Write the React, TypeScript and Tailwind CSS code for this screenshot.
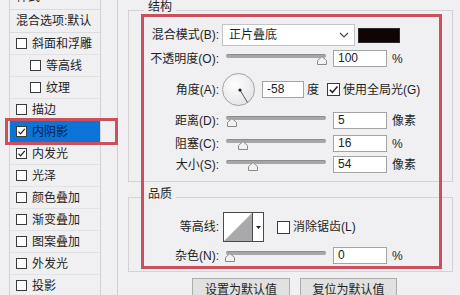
import React from "react";

const Box = ({ checked, className }: { checked?: boolean; className: string }) => (
  <span className={`shrink-0 flex border border-[#3a3a3a] bg-white ${className}`}>
    {checked && (
      <svg viewBox="0 0 10 10" className="w-full h-full">
        <path d="M1.6 5.2 L4 7.6 L8.6 2.2" fill="none" stroke="#1a1a1a" strokeWidth="1.3" />
      </svg>
    )}
  </span>
);

const Slider = ({ pos }: { pos: number }) => (
  <div className="relative w-[100px] h-[17px] shrink-0">
    <div className="absolute left-0 right-0 top-[4px] h-[4px] rounded-full bg-[#a6a6a6] border-t border-[#8c8c8c]" />
    <svg className="absolute top-[6px]" style={{ left: pos - 5 }} width="10" height="9" viewBox="0 0 10 9">
      <path d="M5 0.5 L9.5 4.5 V8.5 H0.5 V4.5 Z" fill="#f2f2f2" stroke="#8a8a8a" />
    </svg>
  </div>
);

const Field = ({ value, className = "w-[54px]" }: { value: string; className?: string }) => (
  <div className={`h-[17px] shrink-0 border border-[#a3a3a3] bg-white px-[4px] text-[12px] leading-[15px] text-[#222] ${className}`}>
    {value}
  </div>
);

const Label = ({ children }: { children: React.ReactNode }) => (
  <span className="w-[90px] shrink-0 text-right">{children}</span>
);

const SliderRow = ({ label, pos, value, unit, mt }: { label: string; pos: number; value: string; unit: string; mt: string }) => (
  <div className={`flex items-center h-[17px] ${mt}`}>
    <Label>{label}</Label>
    <div className="ml-[7px]">
      <Slider pos={pos} />
    </div>
    <div className="ml-[7px]">
      <Field value={value} />
    </div>
    <span className="ml-[5px]">{unit}</span>
  </div>
);

const styles = [
  { name: "斜面和浮雕" },
  { name: "等高线", indent: true },
  { name: "纹理", indent: true },
  { name: "描边" },
  { name: "内阴影", checked: true, active: true },
  { name: "内发光", checked: true },
  { name: "光泽" },
  { name: "颜色叠加" },
  { name: "渐变叠加" },
  { name: "图案叠加" },
  { name: "外发光" },
  { name: "投影" },
];

export default function App() {
  return (
    <div className="relative w-[460px] h-[295px] overflow-hidden bg-[#f0eff1] text-[12px] leading-[14px] text-[#1f1f1f] font-['Liberation_Sans','Noto_Sans_CJK_SC',sans-serif] flex">
      {/* left: style list */}
      <div className="w-[118px] shrink-0 border-r border-[#cfcfd2]">
        <div className="ml-[9px] w-[92px] border-x border-[#d3d2d5]">
          <div className="h-[10px] overflow-hidden flex items-end pl-[6px] pb-[5px] border-b border-[#dcdbde]">
            <span>样式</span>
          </div>
          <div className="h-[23px] flex items-center pl-[6px] border-b border-[#dcdbde]">混合选项:默认</div>
          {styles.map((s) => (
            <div
              key={s.name}
              className={`h-[22px] flex items-center gap-[5px] border-b border-[#e2e1e4] ${s.indent ? "pl-[20px]" : "pl-[6px]"} ${s.active ? "bg-[#0c74d6] text-[#0b1f44]" : ""}`}
            >
              <Box checked={s.checked} className="w-[11px] h-[11px]" />
              <span>{s.name}</span>
            </div>
          ))}
        </div>
      </div>

      {/* right: settings */}
      <div className="flex-1 flex flex-col pl-[10px]">
        <fieldset className="w-[325px] border border-[#d3d2d5] pb-[8px] flex flex-col">
          <legend className="ml-[15px] px-[4px] pb-[6px] leading-[14px]">结构</legend>
          <div className="flex items-center h-[22px] mt-[4px]">
            <Label>混合模式(B):</Label>
            <div className="ml-[3px] w-[133px] h-[22px] border border-[#c4c3c6] bg-white flex items-center justify-between pl-[6px] pr-[5px]">
              <span>正片叠底</span>
              <svg width="10" height="6" viewBox="0 0 10 6">
                <path d="M1 1 L5 5 L9 1" fill="none" stroke="#444" strokeWidth="1.2" />
              </svg>
            </div>
            <div className="ml-[3px] w-[42px] h-[15px] bg-[#110405] border border-[#2a2a2a]" />
          </div>
          <SliderRow label="不透明度(O):" pos={96} value="100" unit="%" mt="mt-[4px]" />
          <div className="flex items-center h-[33px] mt-[6px]">
            <Label>角度(A):</Label>
            <svg className="ml-[3px] shrink-0" width="33" height="33" viewBox="0 0 33 33">
              <defs>
                <radialGradient id="dial" cx="40%" cy="35%" r="70%">
                  <stop offset="0" stopColor="#ffffff" />
                  <stop offset="1" stopColor="#e4e3e6" />
                </radialGradient>
              </defs>
              <circle cx="16.5" cy="16.5" r="16" fill="url(#dial)" stroke="#a2a2a2" />
              <line x1="18" y1="17" x2="25.5" y2="29.5" stroke="#555" strokeWidth="1" />
              <circle cx="18" cy="17" r="1.6" fill="#222" />
            </svg>
            <div className="ml-[7px]">
              <Field value="-58" className="w-[42px]" />
            </div>
            <span className="ml-[3px]">度</span>
            <div className="ml-[8px] flex items-center gap-[3px]">
              <Box checked className="w-[13px] h-[13px]" />
              <span>使用全局光(G)</span>
            </div>
          </div>
          <SliderRow label="距离(D):" pos={6} value="5" unit="像素" mt="mt-[6px]" />
          <SliderRow label="阻塞(C):" pos={17} value="16" unit="%" mt="mt-[6px]" />
          <SliderRow label="大小(S):" pos={27} value="54" unit="像素" mt="mt-[4px]" />
        </fieldset>

        <fieldset className="w-[325px] mt-[5px] border border-[#d3d2d5] pb-[7px] flex flex-col">
          <legend className="ml-[15px] px-[4px] pb-[6px] leading-[14px]">品质</legend>
          <div className="flex items-center h-[30px] mt-[5px]">
            <Label>等高线:</Label>
            <div className="ml-[4px] flex w-[41px] h-[30px] border border-[#4a4a4a] bg-white shrink-0">
              <svg width="28" height="28" viewBox="0 0 28 28">
                <polygon points="0,28 28,0 28,28" fill="#a9a8ab" />
              </svg>
              <div className="w-[11px] border-l border-[#4a4a4a] flex items-center justify-center">
                <svg width="5" height="3" viewBox="0 0 5 3">
                  <path d="M0 0 H5 L2.5 3 Z" fill="#222" />
                </svg>
              </div>
            </div>
            <div className="ml-[13px] flex items-center gap-[3px]">
              <Box className="w-[13px] h-[13px]" />
              <span>消除锯齿(L)</span>
            </div>
          </div>
          <SliderRow label="杂色(N):" pos={4} value="0" unit="%" mt="mt-[5px]" />
        </fieldset>

        <div className="flex gap-[10px] mt-[6px] pl-[64px]">
          <button className="w-[98px] h-[23px] border border-[#adadad] bg-[#e1e1e1]">设置为默认值</button>
          <button className="w-[97px] h-[23px] border border-[#adadad] bg-[#e1e1e1]">复位为默认值</button>
        </div>
      </div>

      {/* red annotation frames */}
      <div className="absolute left-[5px] top-[118px] w-[113px] h-[27px] border-[3px] border-[#c9505c]" />
      <div className="absolute left-[141px] top-[14px] w-[301px] h-[255px] border-[3px] border-[#c9505c]" />
    </div>
  );
}
